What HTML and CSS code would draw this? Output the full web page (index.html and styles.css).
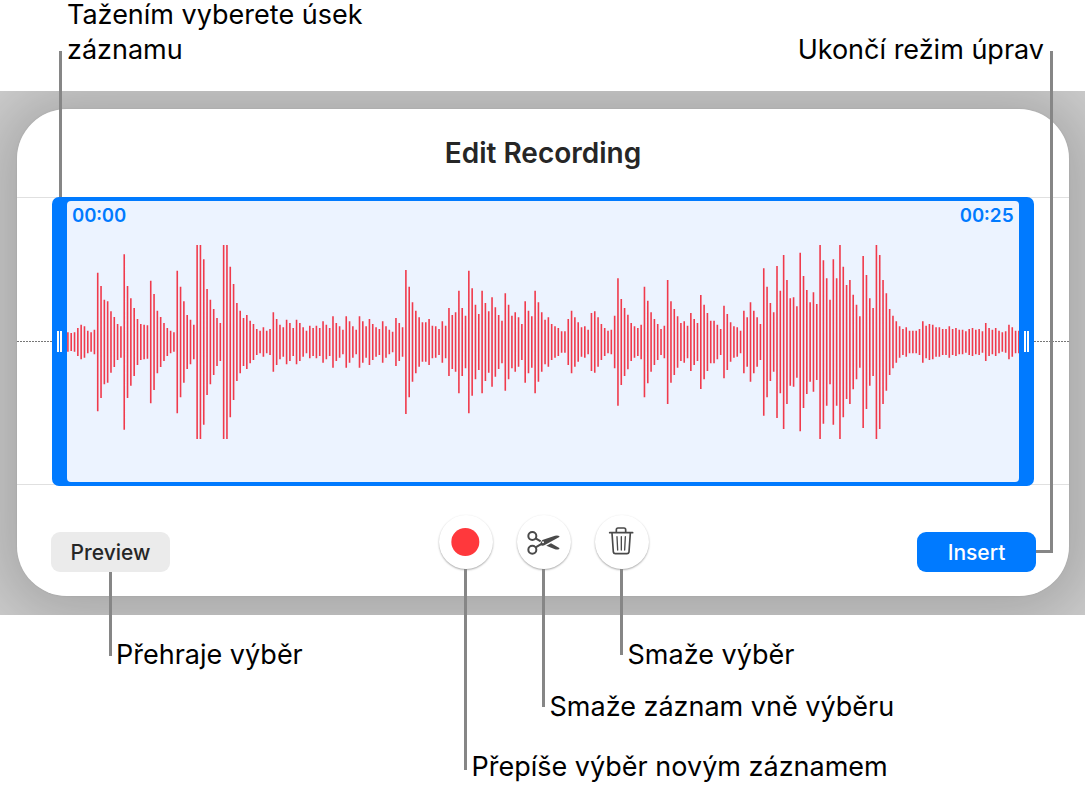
FILE: index.html
```html
<!DOCTYPE html>
<html lang="cs">
<head>
  <meta charset="UTF-8" />
  <meta name="viewport" content="width=device-width, initial-scale=1.0" />
  <title>Edit Recording</title>
  <link rel="stylesheet" href="styles.css">
</head>
<body>
  <header class="notes-top">
    <p class="note note-select">Tažením vyberete úsek záznamu</p>
    <p class="note note-insert">Ukončí režim úprav</p>
  </header>

  <main class="stage">
    <div class="backdrop"></div>
    <section class="sheet">
      <h1>Edit Recording</h1>

      <div class="track">
        <span class="axis"></span>
        <div class="selection">
          <button class="handle handle-start" aria-label="Selection start"></button>
          <div class="clip">
            <div class="times">
              <span>00:00</span>
              <span>00:25</span>
            </div>
            <svg id="wave" class="wave" viewBox="0 0 952 194" preserveAspectRatio="none"></svg>
          </div>
          <button class="handle" aria-label="Selection end"></button>
        </div>
        <span class="axis"></span>
      </div>

      <div class="toolbar">
        <button class="btn btn-preview">Preview</button>
        <div class="tools">
          <button class="tool tool-record" aria-label="Record">
            <svg viewBox="0 0 162 162"><circle cx="79" cy="81" r="42" fill="#ff383c"/></svg>
          </button>
          <button class="tool tool-trim" aria-label="Trim">
            <svg viewBox="0 0 162 162" fill="none" stroke="#4a4a4a" stroke-width="6" stroke-linejoin="round">
              <circle cx="46" cy="63" r="12"/>
              <circle cx="46" cy="104" r="12"/>
              <path d="M56 70L71 79M56 97L71 88"/>
              <path d="M69 87L76 75L114 62Q122 60 127 63V66L82 91Q77 94 69 90Z" fill="#4a4a4a" stroke="none"/>
              <path d="M88 92L102 85L127 99V102Q121 105 114 103Z" fill="#4a4a4a" stroke="none"/>
              <circle cx="78" cy="82" r="3" fill="#fff" stroke="none"/>
            </svg>
          </button>
          <button class="tool tool-delete" aria-label="Delete">
            <svg viewBox="0 0 162 162" fill="none" stroke="#4a4a4a" stroke-width="5" stroke-linecap="round" stroke-linejoin="round">
              <path d="M44 53H113M64 52V44Q64 39 69 39H87Q92 39 92 44V52"/>
              <path d="M51 54L55 111Q56 116 61 116H96Q101 116 102 111L106 54"/>
              <path d="M66 65L68 105M79 65V105M91 65L89 105" stroke-width="4"/>
            </svg>
          </button>
        </div>
        <button class="btn btn-insert">Insert</button>
      </div>
    </section>
  </main>

  <footer class="notes-bottom">
    <p class="note note-preview">Přehraje výběr</p>
    <p class="note note-delete">Smaže výběr</p>
    <p class="note note-trim">Smaže záznam vně výběru</p>
    <p class="note note-record">Přepíše výběr novým záznamem</p>
  </footer>

  <script>
    // bar heights, thirds of a pixel from the centre line
    const peaks = [
      29, 27, 29, 42, 52, 47, 34, 29, 37, 208, 168, 127, 122, 92, 75, 54,
      47, 263, 168, 131, 102, 69, 54, 52, 50, 184, 144, 94, 75, 57, 42, 34,
      29, 214, 166, 122, 81, 67, 52, 291, 291, 248, 159, 127, 99, 72, 57, 291,
      291, 226, 174, 117, 94, 72, 81, 64, 54, 39, 34, 44, 34, 39, 89, 69,
      52, 44, 67, 57, 42, 67, 57, 44, 34, 49, 42, 49, 42, 62, 52, 42,
      77, 57, 47, 37, 77, 62, 47, 37, 77, 62, 47, 69, 54, 44, 39, 62,
      47, 37, 31, 72, 57, 44, 216, 166, 119, 94, 74, 59, 59, 69, 49, 47,
      39, 62, 49, 102, 81, 89, 154, 102, 79, 214, 161, 112, 84, 154, 117, 92,
      134, 104, 81, 64, 146, 112, 79, 89, 74, 54, 122, 94, 77, 154, 119, 89,
      67, 74, 54, 47, 42, 32, 32, 69, 94, 74, 59, 44, 47, 37, 87, 92,
      74, 54, 42, 34, 37, 79, 191, 129, 102, 82, 57, 47, 42, 52, 166, 124,
      89, 69, 54, 39, 49, 186, 122, 99, 77, 57, 62, 49, 87, 69, 57, 141,
      112, 87, 64, 64, 52, 39, 109, 84, 59, 47, 44, 34, 94, 74, 119, 94,
      74, 54, 221, 166, 117, 89, 228, 154, 261, 186, 131, 134, 107, 268, 198, 156,
      119, 149, 114, 291, 245, 191, 127, 248, 191, 291, 226, 171, 186, 142, 112, 77,
      258, 201, 131, 102, 291, 261, 186, 146, 99, 79, 62, 47, 39, 44, 34, 34,
      34, 39, 62, 49, 54, 52, 44, 44, 39, 39, 47, 39, 42, 37, 37, 32,
      39, 42, 37, 39, 32, 57, 42, 37, 42, 34, 29, 32, 52, 44, 34, 34
    ];

    const step = 951 / (peaks.length - 1);
    const d = peaks.map((p, i) => {
      const x = (0.9 + i * step).toFixed(2);
      return `M${x} ${(97 - p / 3).toFixed(1)}V${(97 + p / 3).toFixed(1)}`;
    }).join("");

    document.getElementById("wave").innerHTML = `<path d="${d}" />`;
  </script>
</body>
</html>
```
FILE: styles.css
```css
*,
*::before,
*::after {
  box-sizing: border-box;
}
body {
  margin: 0;
  background: #fff;
  color: #000;
  font-family: Inter, "Liberation Sans", sans-serif;
}
button {
  position: relative;
  padding: 0;
  border: none;
  font-family: inherit;
}

/* notes around the window */
.note {
  margin: 0;
  font-size: 27px;
  line-height: 35px;
}
.notes-top {
  display: flex;
  justify-content: space-between;
  height: 91px;
  padding: 0 43px 0 67px;
}
.note-select {
  max-width: 320px;
  margin-top: -3px;
}
.note-insert {
  margin-top: 32px;
}
.notes-bottom {
  display: grid;
  grid-template-columns: calc(50% - 72px) 78px 78px 1fr;
  row-gap: 17px;
  padding-top: 22px;
  white-space: nowrap;
}
.note-preview {
  padding-left: 116px;
}
.note-delete {
  grid-area: 1 / 4;
}
.note-trim {
  grid-area: 2 / 3;
}
.note-record {
  grid-area: 3 / 2;
  margin-top: 8px;
}

/* window */
.stage {
  position: relative;
  margin-right: 2px;
  padding: 18px 16px 19px 17px;
}
.backdrop {
  position: absolute;
  inset: 0;
  overflow: hidden;
  background: #cdcdcd;
}
.backdrop::after {
  content: "";
  position: absolute;
  inset: 18px 16px 19px 17px;
  border-radius: 50px;
  box-shadow: 0 0 2px rgba(0, 0, 0, 0.1), 0 4px 60px 20px rgba(0, 0, 0, 0.18);
}
.sheet {
  position: relative;
  border-radius: 50px;
  background: #fff;
}
h1 {
  margin: 0;
  color: #262626;
  font-size: 28px;
  font-weight: 600;
  line-height: 88px;
  text-align: center;
}

/* waveform */
.track {
  display: flex;
  height: 288px;
  border-top: 1px solid #e0e0e0;
  border-bottom: 1px solid #e0e0e0;
}
.axis {
  align-self: center;
  width: 35px;
  height: 1px;
  background: repeating-linear-gradient(90deg, #777 0 2px, #fff 2px 3px);
}
.selection {
  display: flex;
  flex: 1;
  margin: -1px 0 -2px;
  padding: 4px 0;
  border-radius: 7px;
  background: #007aff;
}
.handle {
  width: 15px;
  background: none;
}
.handle::after {
  content: "";
  display: block;
  width: 5px;
  height: 21px;
  margin: 0 auto;
  border: solid #fff;
  border-width: 0 2px;
}
.clip {
  flex: 1;
  min-width: 0;
  border-radius: 4px;
  background: #ecf3ff;
}
.times {
  display: flex;
  justify-content: space-between;
  padding: 0 5px;
  color: #007aff;
  font-size: 19px;
  font-weight: 600;
  line-height: 30px;
  font-variant-numeric: tabular-nums;
}
.wave {
  display: block;
  width: 100%;
  height: 194px;
  margin-top: 14px;
}
.wave path {
  stroke: #f03a4c;
  stroke-width: 1.6;
}

/* toolbar */
.toolbar {
  display: grid;
  grid-template-columns: 1fr auto 1fr;
  align-items: start;
  padding: 30px 33px 24px 34px;
}
.btn {
  width: 119px;
  height: 40px;
  margin-top: 17px;
  border-radius: 9px;
  font-size: 21px;
  font-weight: 500;
}
.btn-preview {
  background: #ebebeb;
  color: #262626;
}
.btn-insert {
  justify-self: end;
  background: #007aff;
  color: #fff;
}
.tools {
  display: flex;
  gap: 24px;
}
.tool {
  width: 54px;
  height: 54px;
  border-radius: 50%;
  background: #fff;
  box-shadow: 0 1px 2px rgba(0, 0, 0, 0.35);
}
.tool svg {
  display: block;
}

/* leader lines from a control to its note */
.handle-start::before,
.btn::after,
.tool::after {
  content: "";
  position: absolute;
  top: 100%;
  left: calc(50% - 2px);
  width: 3px;
  background: #868686;
}
.handle-start::before {
  top: -150px;
  left: 7px;
  height: 146px;
}
.btn-preview::after {
  height: 84px;
}
.tool-record::after {
  height: 201px;
}
.tool-trim::after {
  height: 138px;
}
.tool-delete::after {
  height: 86px;
}
.btn-insert::after {
  top: auto;
  bottom: 19px;
  left: 100%;
  width: 17px;
  height: 502px;
  border: solid #868686;
  border-width: 0 3px 3px 0;
  background: none;
}
```
